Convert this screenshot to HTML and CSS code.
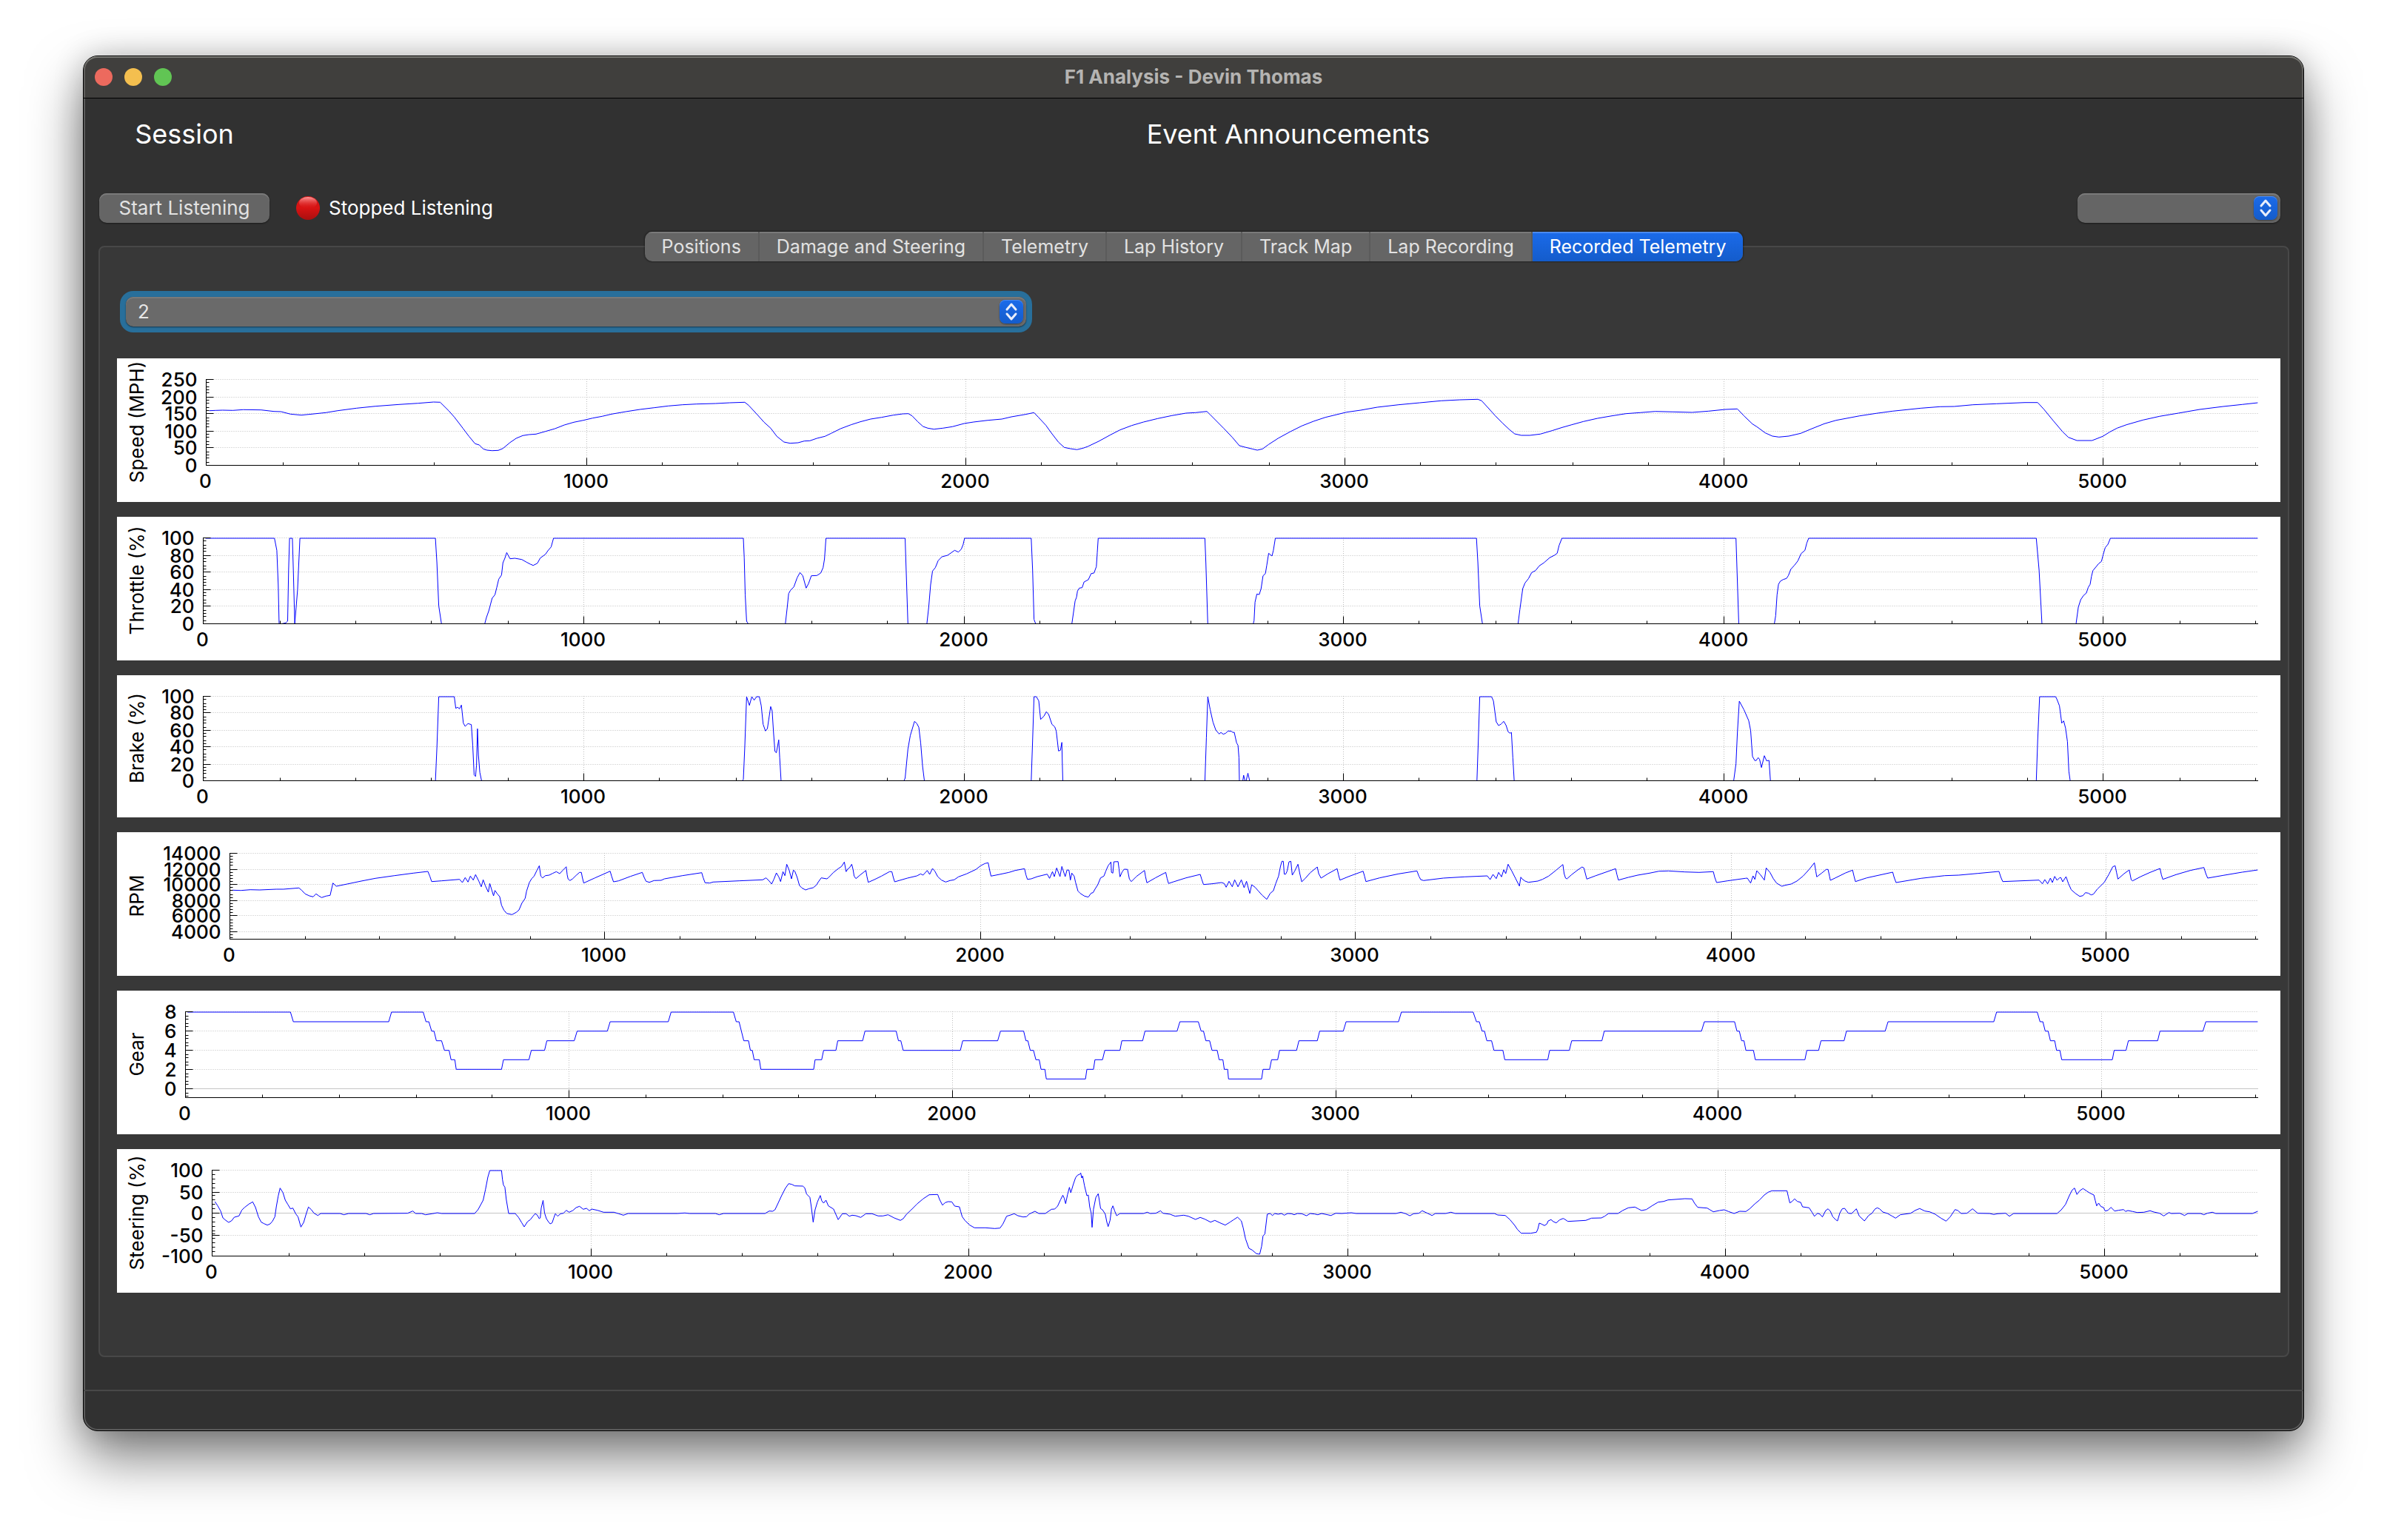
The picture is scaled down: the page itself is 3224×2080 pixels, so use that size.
FILE: index.html
```
<!DOCTYPE html>
<html lang="en">
<head>
<meta charset="utf-8">
<meta name="viewport" content="width=device-width, initial-scale=1">
<title>F1 Analysis - Devin Thomas</title>
<link rel="stylesheet" href="styles.css">
</head>
<body>
<div class="window">
  <header class="titlebar">
    <div class="lights">
      <button class="light light-close" type="button" aria-label="Close"></button>
      <button class="light light-minimize" type="button" aria-label="Minimize"></button>
      <button class="light light-zoom" type="button" aria-label="Zoom"></button>
    </div>
    <h1 class="title">F1 Analysis - Devin Thomas</h1>
  </header>

  <main class="content">
    <section class="session">
      <h2 class="heading">Session</h2>
      <h2 class="heading">Event Announcements</h2>
      <button class="push" type="button">Start Listening</button>
      <div class="status-row">
        <p class="status">
          <svg class="status-dot" viewBox="0 0 32 32" aria-hidden="true">
            <defs>
              <linearGradient id="dot-body" x1="0" y1="0" x2="0" y2="1">
                <stop offset="0" stop-color="#d01818"/>
                <stop offset="0.5" stop-color="#d81313"/>
                <stop offset="1" stop-color="#a81010"/>
              </linearGradient>
              <linearGradient id="dot-shine" x1="0" y1="0" x2="0" y2="1">
                <stop offset="0" stop-color="#ff9a9a"/>
                <stop offset="1" stop-color="#e01a1a" stop-opacity="0"/>
              </linearGradient>
            </defs>
            <circle cx="16" cy="16" r="16" fill="url(#dot-body)"/>
            <ellipse cx="16" cy="9" rx="12" ry="8" fill="url(#dot-shine)"/>
          </svg>
          Stopped Listening
        </p>
        <div class="combo combo-small">
          <select class="combo-field" aria-label="Driver"><option value=""></option></select>
          <svg class="stepper" viewBox="0 0 32 32" aria-hidden="true"><path d="M10 13 16 6 22 13M10 19 16 26 22 19"/></svg>
        </div>
      </div>
    </section>

    <section class="group">
      <nav class="tabs" role="tablist">
        <button class="tab" type="button" role="tab">Positions</button>
        <button class="tab" type="button" role="tab">Damage and Steering</button>
        <button class="tab" type="button" role="tab">Telemetry</button>
        <button class="tab" type="button" role="tab">Lap History</button>
        <button class="tab" type="button" role="tab">Track Map</button>
        <button class="tab" type="button" role="tab">Lap Recording</button>
        <button class="tab tab-active" type="button" role="tab" aria-selected="true">Recorded Telemetry</button>
      </nav>
      <div class="panel" role="tabpanel">
        <div class="combo combo-focus">
          <select class="combo-field" aria-label="Lap"><option>2</option></select>
          <svg class="stepper" viewBox="0 0 32 32" aria-hidden="true"><path d="M10 13 16 6 22 13M10 19 16 26 22 19"/></svg>
        </div>
        <div class="charts" id="charts"></div>
      </div>
    </section>
  </main>
  <footer class="statusbar"></footer>
</div>
<script src="charts.js"></script>
</body>
</html>
```
FILE: styles.css
```
* {
  box-sizing: border-box;
}

body {
  margin: 0;
  min-height: 100vh;
  padding: 75px 112px 147px;
  display: flex;
  background: #fff;
  color: #fff;
  font-family: Inter, "Liberation Sans", sans-serif;
  font-size: 26px;
  line-height: 32px;
  overflow-x: hidden;
}

h1, h2, p {
  margin: 0;
}

button, select {
  font: inherit;
  border: 0;
  margin: 0;
}

.window {
  flex: 1;
  min-width: 0;
  display: flex;
  flex-direction: column;
  border: 1px solid #000;
  border-radius: 20px;
  background: #313131;
  box-shadow: 0 36px 72px rgba(0, 0, 0, 0.5), 0 0 40px rgba(0, 0, 0, 0.2), inset 0 0 0 2px #5a5a5a;
}

.titlebar {
  display: grid;
  grid-template-columns: 1fr auto 1fr;
  align-items: center;
  height: 57px;
  padding: 0 15px;
  border-bottom: 1px solid #000;
  border-radius: 19px 19px 0 0;
  background: #403f3d;
  box-shadow: inset 0 2px 0 #7a7a75, inset 2px 0 0 #5e5d5b, inset -2px 0 0 #5e5d5b;
}

.lights {
  display: flex;
  gap: 16px;
}

.light {
  width: 24px;
  height: 24px;
  padding: 0;
  border-radius: 50%;
}

.light-close { background: #ec6a5e; }
.light-minimize { background: #f4bf4f; }
.light-zoom { background: #61c554; }

.title {
  font-size: 26px;
  line-height: 32px;
  font-weight: 700;
  color: #b5b4b2;
}

.content {
  flex: 1;
  display: flex;
  flex-direction: column;
  padding: 24px 19px 44px 20px;
}

.session {
  display: grid;
  grid-template-columns: 230px 1fr;
  column-gap: 36px;
  row-gap: 56px;
  padding: 0 12px 0 1px;
  align-items: center;
}

.heading {
  font-size: 36px;
  line-height: 48px;
  font-weight: 400;
  text-align: center;
}

.push {
  height: 40px;
  padding: 0;
  border-radius: 10px;
  background: #656565;
  color: #e2e2e2;
  box-shadow: inset 0 2px 0 #7a7a7a, 0 1px 2px rgba(0, 0, 0, 0.5);
}

.status-row {
  display: flex;
  align-items: center;
  justify-content: space-between;
}

.status {
  display: flex;
  align-items: center;
  gap: 12px;
}

.status-dot {
  width: 32px;
  height: 32px;
}

.combo {
  display: grid;
  grid-template-columns: 1fr 32px 4px;
  align-items: center;
  border-radius: 10px;
}

.combo-field {
  grid-area: 1 / 1 / 2 / 4;
  width: 100%;
  height: 40px;
  padding: 0 16px;
  border-radius: 10px;
  appearance: none;
  background: #656565;
  color: #e6e6e6;
  box-shadow: inset 0 2px 0 #7a7a7a, 0 1px 2px rgba(0, 0, 0, 0.5);
}

.stepper {
  grid-area: 1 / 2 / 2 / 3;
  width: 32px;
  height: 32px;
  border-radius: 8px;
  background: linear-gradient(#1b6bea, #145ccb);
  box-shadow: inset 0 1px 0 #4a8af0, 0 1px 2px rgba(0, 0, 0, 0.4);
  fill: none;
  stroke: #e8eefb;
  stroke-width: 3;
  stroke-linecap: round;
  stroke-linejoin: round;
  pointer-events: none;
}

.combo-small {
  width: 274px;
}

.combo-focus {
  width: 1216px;
  max-width: calc(100% - 24px);
  margin-left: 12px;
  box-shadow: 0 0 0 8px #286f9b;
}

.combo-focus .combo-field {
  background: #6a6a6a;
}

.group {
  flex: 1;
  display: flex;
  flex-direction: column;
  align-items: center;
  padding-top: 12px;
}

.tabs {
  z-index: 1;
  display: flex;
  height: 40px;
  margin-bottom: -21px;
  border-radius: 10px;
  background: #656565;
  box-shadow: 0 0 2px 1px rgba(0, 0, 0, 0.35);
  overflow: hidden;
}

.tab {
  padding: 0 23px;
  border-right: 2px solid #5b5b5b;
  background: none;
  color: #e2e2e2;
  font-size: 25px;
  white-space: nowrap;
  box-shadow: inset 0 2px 0 #7a7a7a;
}

.tab-active {
  border-right: 0;
  background: linear-gradient(#1b6bea, #145ccb);
  color: #fff;
  box-shadow: inset 0 2px 0 #4a8af0;
}

.panel {
  flex: 1;
  align-self: stretch;
  padding: 67px 10px 40px 23px;
  border: 2px solid #484848;
  border-radius: 8px;
  background: #383838;
}

.charts {
  display: grid;
  gap: 20px;
  margin-top: 43px;
}

.chart {
  display: block;
  width: 100%;
  height: auto;
  background: #fff;
}

.chart text {
  fill: #000;
  font-size: 26px;
  font-weight: 500;
}

.chart .axis-title {
  font-weight: 400;
}

.label-x, .axis-title { text-anchor: middle; }
.label-y { text-anchor: end; }

.axis, .grid, .zero, .trace {
  fill: none;
  stroke-width: 1px;
}

.axis { stroke: #000; }
.grid { stroke: #bdbdbd; stroke-dasharray: 1 2; }
.zero { stroke: #c4c4c4; }
.trace { stroke: #00f; }

.statusbar {
  height: 55px;
  border-top: 2px solid #484848;
}
```
FILE: charts.js
```
// Each run of samples covers RUN sample columns; samples are stored as
// "x,y" pairs with SX columns and SY rows to one unit of the drawing.
const RUN = 1536.64;
const SX = 1.568;
const SY = 3;
const WIDTH = 2922;
const TOP = 28;
const RIGHT = 2892;
const NS = "http://www.w3.org/2000/svg";

const charts = [
  {
    title: "Speed (MPH)", height: 194, zero: 120.6, step: 512.4, bottom: 144, shift: -14,
    labels: [0, 50, 100, 150, 200, 250], y0: 144, dy: 23.2,
    runs: [
      "208,254 222,253 236,252 258,253 280,250 318,251 345,257 360,258 380,268 403,272 425,268 455,262 480,254 520,244 560,236 610,229 650,224 683,219 697,220 715,254 727,280 735,300 745,325 758,358 771,388 780,393 788,409 796,414 807,416 820,415 830,407 845,383 858,366 872,355 885,351 900,349 920,338 940,327 960,312 980,301 1000,293 1020,284 1040,277 1060,268 1090,258 1120,249 1150,242 1180,235 1210,230 1240,227 1280,225 1310,222 1342,220 1350,232 1370,273 1383,301 1397,325 1410,358 1425,381 1438,386 1455,384 1468,377 1480,376 1495,366 1512,358 1525,346 1545,327 1567,311",
      "50,299 72,288 95,281 120,272 140,267 152,266 160,275 172,299 183,318 193,325 206,329 225,325 245,319 270,306 290,300 320,293 350,288 370,279 400,269 418,262 427,280 443,313 455,345 470,382 482,403 495,408 509,412 522,406 532,399 555,378 580,352 600,332 625,314 650,300 680,286 710,274 740,264 760,262 784,257 790,268 805,297 820,326 838,362 853,396 865,402 880,409 891,414 902,409 915,391 935,366 960,340 985,316 1010,297 1035,281 1080,260 1110,252 1145,240 1190,230 1235,222 1280,214 1320,210 1358,208 1366,214 1380,243 1395,275 1410,304 1425,331 1436,348 1450,354 1468,354 1490,349 1515,335",
      "0,322 20,311 45,298 75,285 105,275 135,266 165,262 197,257 235,259 275,261 310,256 345,249 371,247 385,275 403,308 412,319 430,344 445,357 459,361 480,357 505,346 530,326 555,307 580,293 630,275 665,265 700,256 760,244 800,238 830,237 870,230 920,226 980,221 1007,221 1020,248 1040,295 1060,340 1072,362 1090,375 1122,375 1145,358 1160,340 1175,325 1195,311 1230,292 1265,277 1305,264 1350,249 1400,237 1440,229 1473,222"
    ]
  },
  {
    title: "Throttle (%)", height: 194, zero: 116.6, step: 513.2, bottom: 144, shift: -228,
    labels: [0, 20, 40, 60, 80, 100], y0: 144, dy: 23.2,
    runs: [
      "200,771 346,771 351,820 354,960 356,1120 370,1114 374,1107 376,900 378,771 384,771 386,900 389,1116 392,1050 395,980 400,771 687,771 690,870 694,1045 700,1120 791,1120 795,1092 800,1065 807,1014 813,1000 817,970 821,937 827,920 830,870 834,852 838,829 845,854 855,852 870,857 880,868 888,876 894,881 903,872 909,851 920,836 925,822 932,806 937,771 1339,771 1341,850 1343,1000 1346,1107 1350,1120 1428,1120 1432,1050 1435,995 1439,982 1446,968 1453,931 1459,910 1465,923 1472,973 1477,955 1483,923 1495,922 1503,912 1508,890 1511,855 1514,771",
      "145,771 151,1120 191,1120 195,1050 199,960 203,904 209,890 215,862 223,846 235,840 250,820 258,827 264,815 268,796 271,771 412,771 415,900 418,1100 422,1120 498,1120 501,1080 505,1025 508,1010 510,985 514,973 520,971 524,948 533,939 539,914 545,912 550,886 552,830 554,771 780,771 782,870 786,1120 882,1120 884,1105 886,1030 890,997 895,999 899,975 903,923 908,914 911,880 915,832 922,843 925,820 929,771 1355,771 1358,870 1362,1045 1368,1120 1443,1120 1447,1060 1453,975 1458,952 1465,935 1472,910 1480,902 1488,883 1498,870 1510,850 1520,840 1526,832 1530,800 1536,771",
      "368,771 374,1120 449,1120 452,1085 455,1000 458,958 462,945 468,938 475,934 479,922 484,897 492,880 499,863 506,833 514,820 518,790 522,771 1004,771 1010,900 1016,1120 1088,1120 1093,1050 1098,1020 1104,1003 1110,993 1114,970 1118,958 1121,925 1124,902 1130,888 1136,874 1142,865 1146,835 1150,809 1156,795 1161,771 1473,771"
    ]
  },
  {
    title: "Brake (%)", height: 192, zero: 116.6, step: 513.2, bottom: 142, shift: -12,
    labels: [0, 20, 40, 60, 80, 100], y0: 142, dy: 22.8,
    runs: [
      "200,466 687,466 690,330 694,123 727,123 730,170 734,166 738,172 742,157 746,230 750,243 756,232 763,236 766,320 769,440 772,446 774,400 776,253 778,360 781,430 785,466 1336,466 1339,458 1342,330 1346,123 1352,158 1357,123 1362,137 1367,123 1373,123 1377,160 1381,235 1386,262 1390,252 1397,163 1400,180 1403,270 1406,345 1409,350 1414,298 1416,370 1419,466",
      "142,466 145,453 151,335 156,280 165,223 170,232 174,247 178,310 182,405 186,466 412,466 415,300 418,123 423,123 428,140 432,215 439,202 444,184 449,195 456,235 462,245 465,262 470,343 474,340 477,308 478,390 479,466 780,466 783,290 786,123 791,175 797,226 803,258 810,274 814,268 819,275 824,271 829,262 836,263 839,268 842,267 847,310 850,320 852,370 853,466 860,466 862,441 865,466 867,466 871,433 875,466 1356,466 1359,300 1362,123 1387,123 1391,140 1397,225 1402,240 1407,234 1413,223 1418,240 1422,265 1426,271 1429,268 1432,370 1435,466",
      "363,466 368,395 371,270 375,141 385,176 395,220 399,260 403,365 408,382 411,381 415,370 418,377 422,410 428,362 433,383 438,381 441,466 1004,466 1007,300 1011,123 1045,123 1048,135 1053,160 1058,230 1062,221 1066,250 1070,305 1073,425 1076,466 1473,466"
    ]
  },
  {
    title: "RPM", height: 194, zero: 152, step: 506.8, bottom: 144, shift: -224,
    labels: [4000, 6000, 8000, 10000, 12000, 14000], y0: 134, dy: 21.2,
    runs: [
      "257,907 275,908 295,905 315,906 350,903 365,903 398,898 404,908 411,922 420,930 428,934 434,922 440,930 446,937 455,931 464,928 470,878 477,891 500,882 530,870 560,859 600,848 640,838 671,831 675,850 679,872 700,869 738,863 744,876 750,856 756,874 761,850 767,866 772,844 779,871 784,893 788,865 793,890 799,915 802,880 810,930 813,908 818,922 823,933 827,968 832,988 838,1001 849,1006 858,997 864,987 870,960 877,940 880,911 886,875 891,860 896,850 902,826 907,808 910,850 914,857 920,848 928,846 935,839 943,832 950,840 957,826 964,812 966,845 968,862 972,868 978,860 985,847 992,835 996,835 998,855 1001,878 1025,857 1057,830 1060,850 1064,873 1075,869 1100,851 1125,835 1129,855 1133,871 1140,875 1150,868 1165,867 1172,861 1210,848 1251,836 1254,856 1258,877 1268,878 1275,874 1330,869 1380,865 1387,857 1394,870 1399,882 1404,862 1409,837 1414,853 1418,872 1423,832 1427,848 1431,802 1436,825 1441,861 1445,826 1448,830 1453,855 1458,888 1463,898 1471,906 1478,901 1487,897 1494,886 1498,873 1504,857 1516,861 1520,855 1530,835 1540,820 1547,811 1553,793",
      "20,832 24,820 27,817 32,802 35,825 37,850 41,860 50,845 62,827 64,850 67,875 80,864 95,850 112,832 117,832 120,855 123,873 150,858 170,849 178,841 183,846 192,827 197,843 203,819 208,830 214,852 222,866 231,874 240,868 249,865 258,853 275,841 295,823 305,808 314,799 321,796 324,825 327,850 345,843 365,835 378,827 398,820 401,845 404,863 412,861 425,852 446,842 451,859 457,832 461,852 466,817 473,852 477,811 484,852 488,825 492,826 495,866 498,838 503,850 506,875 511,910 516,920 525,931 533,935 539,919 543,917 548,900 553,885 559,857 566,850 570,830 575,808 581,793 582,835 585,838 587,792 596,791 598,820 600,853 605,832 609,822 616,823 620,862 624,872 635,851 652,827 654,850 657,877 675,857 697,835 700,860 703,880 712,874 740,857 770,843 773,862 777,884 795,881 815,876 821,880 825,895 831,871 838,893 843,865 850,893 857,865 863,897 868,871 875,920 879,885 886,895 893,910 901,927 911,944 918,920 925,909 930,880 936,850 940,810 943,790 946,790 948,842 951,842 954,830 958,792 962,790 965,846 970,830 977,802 981,840 985,873 992,860 1003,836 1018,813 1021,840 1026,858 1040,841 1060,820 1063,845 1066,866 1085,851 1115,830 1118,850 1121,872 1150,857 1190,841 1229,829 1233,850 1237,864 1243,868 1285,858 1330,853 1378,849 1384,864 1390,843 1397,860 1402,835 1408,853 1413,824 1417,840 1422,802 1430,830 1438,860 1446,890 1449,854 1452,862 1458,870 1465,875 1485,870 1495,863 1508,850 1523,827 1538,803",
      "4,840 7,858 10,861 20,844 33,825 42,813 46,817 49,840 52,862 70,849 113,820 116,845 119,866 140,855 160,846 185,838 205,830 225,829 260,833 290,835 320,832 323,855 327,876 350,869 388,859 392,858 399,878 404,849 408,863 412,828 420,845 428,866 432,817 440,835 447,860 454,878 465,891 472,887 485,882 497,870 510,850 523,823 534,796 537,830 539,853 550,837 559,823 563,823 566,850 568,867 580,856 600,837 615,826 618,850 621,872 645,857 700,834 703,855 707,876 760,859 810,848 840,846 880,839 925,831 929,855 933,872 1010,866 1017,881 1022,864 1028,881 1034,858 1038,876 1043,851 1048,867 1053,857 1056,856 1060,873 1067,852 1072,880 1078,905 1087,920 1096,932 1103,929 1108,917 1114,919 1120,926 1125,923 1133,903 1148,875 1158,842 1166,812 1171,808 1174,835 1177,862 1190,840 1201,825 1205,865 1208,869 1225,852 1245,835 1266,819 1269,845 1272,863 1300,844 1330,827 1359,815 1363,840 1367,858 1400,847 1440,834 1473,825"
    ]
  },
  {
    title: "Gear", height: 194, zero: 92.8, step: 517.5, bottom: 144, shift: -8,
    labels: [0, 2, 4, 6, 8], y0: 132, dy: 26, zeroLine: 132,
    runs: [
      "162,111 380,111 386,150 588,150 594,111 661,111 667,150 673,150 679,188 684,188 689,227 700,227 706,266 716,266 720,304 728,304 731,343 827,343 831,304 885,304 890,266 918,266 923,227 981,227 987,188 1051,188 1057,150 1180,150 1186,111 1318,111 1324,150 1330,150 1340,227 1350,227 1354,266 1358,266 1362,304 1373,304 1376,343 1488,343 1491,304 1505,304 1509,266 1535,266 1539,227",
      "55,227 60,188 126,188 131,227 136,227 141,266 262,266 267,227 341,227 347,188 396,188 401,227 405,227 410,266 417,266 422,304 429,304 433,343 441,343 444,382 527,382 530,343 544,343 547,304 563,304 568,266 600,266 604,227 648,227 653,188 721,188 727,150 766,150 772,188 777,188 782,227 790,227 795,266 806,266 810,304 818,304 821,343 828,343 830,382 900,382 903,343 917,343 921,304 934,304 938,266 974,266 979,227 1018,227 1023,188 1073,188 1079,150 1190,150 1196,111 1348,111 1355,150 1361,150 1367,188 1372,188 1377,227 1387,227 1392,266 1411,266 1415,304 1506,304 1510,266",
      "15,266 20,227 84,227 89,188 295,188 301,150 365,150 370,188 375,188 380,227 385,227 389,266 405,266 409,304 514,304 518,266 543,266 548,227 597,227 602,188 684,188 690,150 914,150 920,111 1006,111 1012,150 1018,150 1023,188 1029,188 1034,227 1043,227 1047,266 1054,266 1058,304 1165,304 1169,266 1194,266 1199,227 1261,227 1266,188 1357,188 1363,150 1473,150"
    ]
  },
  {
    title: "Steering (%)", height: 194, zero: 128.9, step: 510.9, bottom: 144, shift: -222,
    labels: [-100, -50, 0, 50, 100], y0: 144, dy: 29, zeroLine: 86,
    runs: [
      "220,879 226,896 232,917 237,945 243,955 249,963 255,957 261,942 271,937 277,913 283,902 292,889 300,880 306,903 312,940 318,962 324,968 331,974 337,969 342,958 347,940 350,900 354,856 358,824 364,842 369,873 374,889 380,908 385,905 391,928 396,941 402,982 408,963 413,930 418,901 424,911 430,926 438,935 444,927 485,927 493,932 503,927 540,927 548,932 556,927 628,926 639,917 645,927 658,927 666,932 680,928 691,924 700,927 770,927 777,912 783,891 788,873 793,830 798,780 802,753 827,753 829,790 831,812 834,820 837,870 842,927 856,927 863,943 870,965 875,981 882,960 888,952 894,937 898,928 902,932 907,948 909,945 911,905 915,874 918,925 922,948 926,960 930,969 934,965 938,943 941,928 946,938 952,928 958,926 964,914 970,922 978,915 985,903 992,898 1000,910 1007,906 1013,916 1018,909 1030,914 1043,922 1065,922 1075,928 1085,934 1095,927 1200,927 1215,925 1225,927 1280,927 1288,932 1297,927 1385,927 1394,917 1401,918 1406,912 1412,888 1420,855 1428,825 1435,806 1442,809 1448,815 1465,816 1469,823 1473,848 1480,862 1483,900 1487,962 1491,912 1496,880 1502,854 1505,875 1509,885 1514,873 1519,896 1530,909 1540,952",
      "12,928 20,928 27,938 33,934 41,936 51,943 62,928 75,928 88,937 98,937 109,932 122,945 135,955 141,948 148,930 158,912 170,889 183,868 196,851 214,850 218,870 224,893 230,883 236,879 244,880 250,897 260,900 263,920 266,940 272,956 282,974 292,985 315,985 335,988 346,986 352,970 360,938 370,932 376,928 384,936 395,941 402,940 408,929 420,918 428,927 442,927 455,910 462,909 468,897 474,872 479,853 482,865 485,887 489,850 493,821 496,843 501,810 506,782 510,772 515,768 517,763 519,783 521,775 525,815 530,855 533,852 536,900 539,925 541,983 544,910 549,862 554,847 556,870 559,907 563,912 569,930 572,960 575,980 579,955 582,910 585,896 589,917 593,936 600,927 650,927 658,922 664,927 676,926 686,916 691,926 706,930 717,938 735,934 745,938 760,951 770,943 780,950 792,962 801,955 812,965 823,974 833,962 841,952 849,942 857,957 861,985 866,1030 873,1068 880,1075 889,1090 896,1092 900,1060 903,1018 907,1010 910,960 912,930 918,927 923,935 928,927 935,930 942,927 948,934 955,927 963,928 969,932 976,927 985,928 995,936 1003,927 1012,929 1019,932 1027,927 1047,935 1057,926 1070,927 1090,924 1100,927 1185,927 1195,922 1205,928 1214,936 1222,928 1233,926 1240,916 1250,925 1261,935 1268,927 1290,927 1301,922 1310,927 1393,927 1400,933 1416,935 1426,952 1436,975 1442,992 1450,1007 1470,1007 1482,1003 1485,990 1488,966 1493,970 1499,976 1504,970 1507,957 1513,952 1518,960 1524,965 1531,953",
      "2,947 5,950 12,959 50,955 62,946 83,945 90,938 98,927 118,927 128,915 140,904 154,901 161,908 168,915 178,911 190,896 203,881 215,878 224,872 260,867 275,868 280,885 287,902 307,905 313,912 320,920 333,915 343,912 352,919 364,927 376,918 389,919 397,908 408,888 418,872 428,852 436,841 444,835 476,835 479,860 482,884 487,878 492,868 498,878 505,882 509,900 523,904 529,922 534,938 541,926 546,930 551,941 558,915 563,908 568,918 573,940 579,952 583,957 588,925 593,908 598,906 606,926 613,927 623,908 629,937 635,948 640,957 649,935 656,926 662,910 667,904 672,908 679,921 689,927 698,937 706,946 716,932 738,926 748,914 757,907 768,917 778,920 790,930 802,946 813,958 822,940 832,911 838,915 845,927 857,926 869,908 880,926 905,927 914,931 922,928 939,926 947,938 956,927 1048,927 1057,912 1066,890 1074,855 1080,832 1085,824 1090,850 1096,835 1103,826 1111,836 1117,844 1126,852 1129,875 1132,896 1136,885 1141,899 1146,902 1150,917 1156,914 1162,902 1170,917 1178,914 1189,911 1193,919 1198,915 1208,919 1218,923 1232,922 1245,916 1253,921 1265,926 1274,937 1285,923 1290,927 1308,926 1318,935 1325,927 1352,927 1359,932 1366,926 1377,922 1384,927 1462,927 1473,918"
    ]
  }
];

function add(parent, name, attrs, text) {
  const el = document.createElementNS(NS, name);
  for (const key in attrs) el.setAttribute(key, attrs[key]);
  if (text !== undefined) el.textContent = text;
  parent.appendChild(el);
  return el;
}

// Ticks sit on a two-unit grid so that their lines stay crisp.
const snap = v => 2 * Math.round(v / 2) + 0.5;

function tracePoints(chart) {
  return chart.runs.map((run, i) => run.split(" ").map(pair => {
    const [x, y] = pair.split(",").map(Number);
    return ((x + RUN * i) / SX - 8).toFixed(1) + "," + (y / SY + chart.shift).toFixed(1);
  }).join(" ")).join(" ");
}

function draw(chart, index) {
  const svg = add(document.getElementById("charts"), "svg", {
    class: "chart", viewBox: `0 0 ${WIDTH} ${chart.height}`, role: "img", "aria-label": chart.title
  });
  const left = Math.floor(chart.zero) + 0.5;
  const base = chart.bottom + 0.5;
  const clip = add(svg, "clipPath", { id: "plot-" + index });
  add(clip, "rect", { x: left, y: 0, width: RIGHT - left, height: chart.bottom });

  let axis = `M${left} ${TOP}V${base}H${RIGHT}`;
  let grid = "";
  const mid = (TOP + chart.bottom) / 2;

  chart.labels.forEach((label, i) => {
    const y = snap(chart.y0 - i * chart.dy);
    axis += `M${left} ${y}h10`;
    if (y < chart.bottom && y - 0.5 !== chart.zeroLine) grid += `M${left + 10} ${y}H${RIGHT}`;
    add(svg, "text", { class: "label-y", x: left - 12, y: y + 9 }, label);
  });
  for (let y = chart.y0; y > TOP; y -= chart.dy / 5) axis += `M${left} ${snap(y)}h4`;
  for (let y = chart.y0; y < chart.bottom; y += chart.dy / 5) axis += `M${left} ${snap(y)}h4`;

  for (let i = 0; chart.zero + i * chart.step / 5 < RIGHT; i++) {
    const x = i === 0 ? left : snap(chart.zero + i * chart.step / 5);
    axis += `M${x} ${base}v${i % 5 ? -4 : -10}`;
    if (i % 5 === 0) {
      if (i > 0) grid += `M${x} ${TOP}V${chart.bottom - 10}`;
      add(svg, "text", { class: "label-x", x: x - 1, y: chart.bottom + 31 }, i * 200);
    }
  }

  add(svg, "path", { class: "grid", d: grid });
  if (chart.zeroLine) add(svg, "path", { class: "zero", d: `M${left} ${chart.zeroLine + 0.5}H${RIGHT}` });
  add(svg, "polyline", { class: "trace", points: tracePoints(chart), "clip-path": `url(#plot-${index})` });
  add(svg, "path", { class: "axis", d: axis });
  add(svg, "text", { class: "axis-title", transform: `translate(36 ${mid}) rotate(-90)` }, chart.title);
}

charts.forEach(draw);
```
